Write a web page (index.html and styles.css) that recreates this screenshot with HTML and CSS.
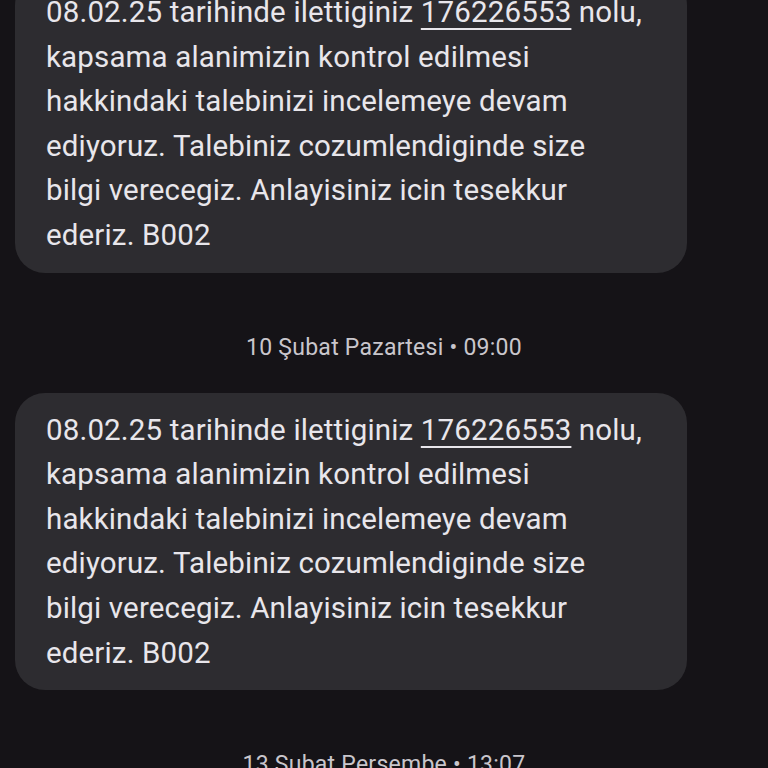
FILE: index.html
```html
<!DOCTYPE html>
<html lang="tr">
<head>
<meta charset="utf-8">
<link rel="stylesheet" href="styles.css">
</head>
<body>
<main class="thread">
  <div class="bubble">
    <p class="msg">08.02.25 tarihinde ilettiginiz <span class="num">176226553</span> nolu,<br>kapsama alanimizin kontrol edilmesi<br>hakkindaki talebinizi incelemeye devam<br>ediyoruz. Talebiniz cozumlendiginde size<br>bilgi verecegiz. Anlayisiniz icin tesekkur<br>ederiz. B002</p>
  </div>
  <div class="stamp">10 Şubat Pazartesi • 09:00</div>
  <div class="bubble">
    <p class="msg">08.02.25 tarihinde ilettiginiz <span class="num">176226553</span> nolu,<br>kapsama alanimizin kontrol edilmesi<br>hakkindaki talebinizi incelemeye devam<br>ediyoruz. Talebiniz cozumlendiginde size<br>bilgi verecegiz. Anlayisiniz icin tesekkur<br>ederiz. B002</p>
  </div>
  <div class="stamp">13 Şubat Perşembe • 13:07</div>
</main>
</body>
</html>
```
FILE: styles.css
```css
html, body {
  margin: 0;
  padding: 0;
  background: #151317;
  height: 100%;
  overflow: hidden;
}
.thread {
  margin-top: -25px;
  padding: 0 81px 0 15px;
  display: flex;
  flex-direction: column;
  font-family: Roboto, "Noto Sans", sans-serif;
}
.bubble {
  background: #2d2c30;
  border-radius: 30px;
  padding: 15px 30px 15px 31px;
}
.msg {
  margin: 0;
  color: #e8e6eb;
  font-size: 29.5px;
  line-height: 44.6px;
  letter-spacing: 0.15px;
  white-space: nowrap;
}
.num {
  text-decoration: underline;
  text-decoration-thickness: 2px;
  text-underline-offset: 6px;
}
.stamp {
  color: #c9c6cc;
  font-size: 23px;
  line-height: 28px;
  letter-spacing: 0.25px;
  text-align: center;
  padding: 61px 0 31px 66px;
}
```
